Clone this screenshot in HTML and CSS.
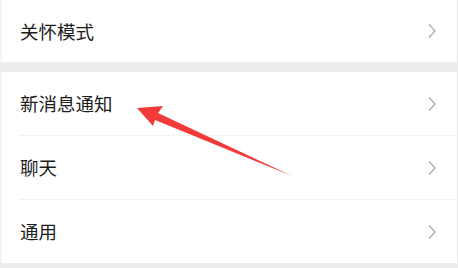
FILE: index.html
```html
<!DOCTYPE html>
<html lang="zh">
<head>
<meta charset="utf-8">
<link rel="stylesheet" href="styles.css">
</head>
<body>
<div class="page">
  <div class="card">
    <div class="row row-first"><span class="label">关怀模式</span><svg class="chev" viewBox="0 0 10 16"><path d="M2 1.5 L8 8 L2 14.5" fill="none" stroke="#b4b4b4" stroke-width="1.5"/></svg></div>
  </div>
  <div class="gap"></div>
  <div class="card">
    <div class="row"><span class="label">新消息通知</span><svg class="chev" viewBox="0 0 10 16"><path d="M2 1.5 L8 8 L2 14.5" fill="none" stroke="#b4b4b4" stroke-width="1.5"/></svg></div>
    <div class="row"><span class="label">聊天</span><svg class="chev" viewBox="0 0 10 16"><path d="M2 1.5 L8 8 L2 14.5" fill="none" stroke="#b4b4b4" stroke-width="1.5"/></svg></div>
    <div class="row row-last"><span class="label">通用</span><svg class="chev" viewBox="0 0 10 16"><path d="M2 1.5 L8 8 L2 14.5" fill="none" stroke="#b4b4b4" stroke-width="1.5"/></svg></div>
  </div>
  <svg class="arrow" viewBox="0 0 458 268" width="458" height="268">
    <polygon points="137,108 163,106 158,113 292,176 155,120 153,126" fill="#f23a3a"/>
  </svg>
</div>
</body>
</html>
```
FILE: styles.css
```css
html, body {
  margin: 0;
  padding: 0;
  background: #ededed;
}
.page {
  position: relative;
  width: 458px;
  height: 268px;
  overflow: hidden;
  font-family: "Noto Sans CJK SC", "Noto Sans", sans-serif;
}
.card {
  background: #ffffff;
  border-left: 2px solid #f4f4f4;
  border-right: 1px solid #e6e6e6;
}
.gap {
  height: 10px;
}
.row {
  height: 63px;
  display: flex;
  align-items: center;
  justify-content: space-between;
  margin-left: 18px;
  padding-right: 20px;
  border-bottom: 1px solid #f2f2f2;
}
.row-first {
  height: 62px;
  border-bottom: none;
}
.row-last {
  border-bottom: none;
}
.label {
  font-size: 18.5px;
  color: #1c1c1c;
  letter-spacing: 0;
  line-height: 1;
}
.chev {
  width: 10px;
  height: 16px;
  display: block;
}
.arrow {
  position: absolute;
  left: 0;
  top: 0;
}
```
